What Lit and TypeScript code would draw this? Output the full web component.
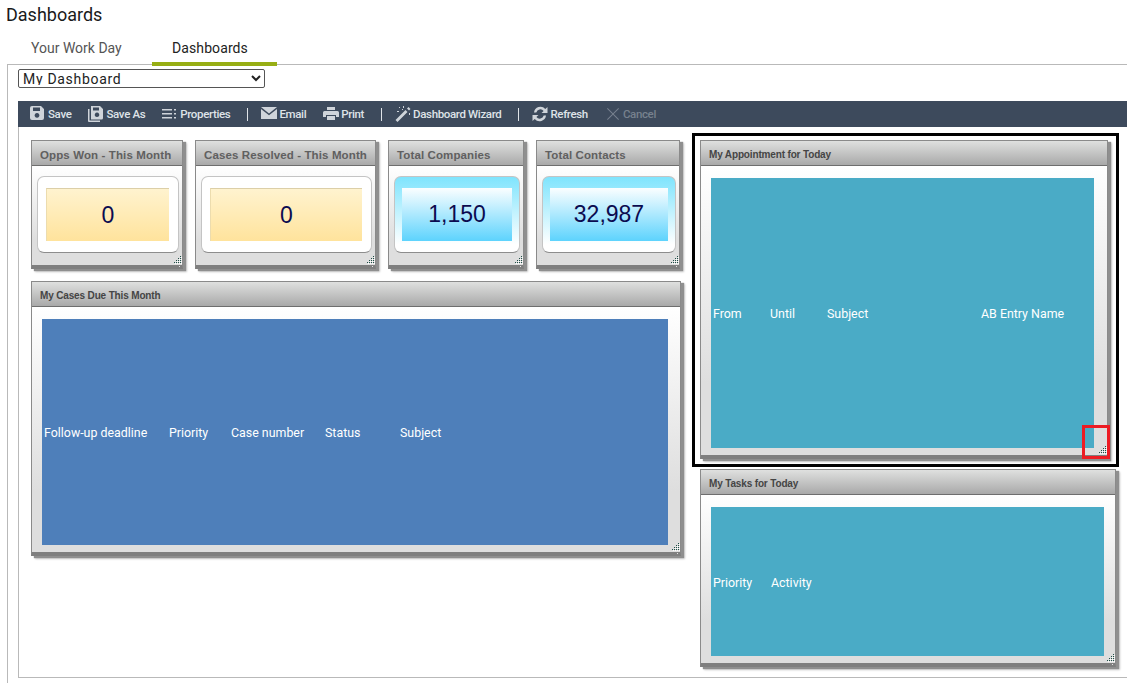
import { LitElement, css, html, svg } from "lit";
import { customElement, property } from "lit/decorators.js";

const grip = svg`<svg class="grip" width="8" height="8" viewBox="0 0 8 8">
  ${[[6, 0], [4, 2], [6, 2], [2, 4], [4, 4], [6, 4], [0, 6], [2, 6], [4, 6], [6, 6]].map(
    ([x, y]) => svg`<rect x=${x} y=${y} width="1" height="1" fill="#1f4f47" /><rect x=${x + 1} y=${y + 1} width="1" height="1" fill="#fff" />`
  )}
  <rect x="5" y="10" width="1" height="1" fill="#e4e4e4" />
</svg>`;

@customElement("dash-panel")
export class DashPanel extends LitElement {
  @property() heading = "";
  @property({ type: Boolean }) small = false;

  protected render() {
    return html`
      <section class=${this.small ? "small" : ""}>
        <header>${this.heading}</header>
        <div class="body"><slot></slot></div>
        ${grip}
      </section>
    `;
  }

  static styles = css`
    :host {
      display: block;
    }
    section {
      position: relative;
      height: 100%;
      box-sizing: border-box;
      display: flex;
      flex-direction: column;
      border: 1px solid #8a8a8a;
      border-bottom: 4px solid #7f7f7f;
      box-shadow: 3px 2px 1px #8f8f8f, 4px 3px 2px #c8c8c8;
      background: #fff;
    }
    header {
      height: 25px;
      flex: none;
      box-sizing: border-box;
      border-bottom: 1px solid #6e6e6e;
      padding-left: 8px;
      font: bold 10px/27px "Liberation Sans", sans-serif;
      letter-spacing: -0.15px;
      color: #454545;
      background: linear-gradient(#dfe0df, #a9a9a9);
      white-space: nowrap;
      overflow: hidden;
    }
    .small header {
      font: bold 11.5px/28px "Liberation Sans", sans-serif;
      letter-spacing: 0.12px;
      color: #606060;
    }
    .body {
      flex: 1;
      min-height: 0;
      display: flex;
      background: linear-gradient(#fff, #dedede 75%);
      padding: 12px var(--body-right, 13px) 7px 10px;
    }
    .small .body {
      padding: 10px 3px 12px 5px;
    }
    .grip {
      position: absolute;
      right: 0;
      bottom: 1px;
      overflow: visible;
    }
  `;
}

@customElement("stat-box")
export class StatBox extends LitElement {
  @property() value = "";
  @property() tone = "gold";

  protected render() {
    return html`<div class="outer ${this.tone}"><div class="inner">${this.value}</div></div>`;
  }

  static styles = css`
    :host {
      display: block;
      flex: 1;
    }
    .outer {
      height: 100%;
      box-sizing: border-box;
      border: 1px solid #c4c4c4;
      border-bottom-color: #8d8d8d;
      border-radius: 7px;
      padding: 11px 9px 11px 8px;
      display: flex;
    }
    .inner {
      flex: 1;
      display: flex;
      align-items: center;
      justify-content: center;
      font: 23px "Liberation Sans", sans-serif;
      color: #0b0b50;
    }
    .gold {
      background: #fff;
    }
    .gold .inner {
      background: linear-gradient(#fff3cf, #ffe39c);
      border-top: 1px solid #dccfa8;
      border-left: 1px solid #ecdcae;
    }
    .blue {
      background: linear-gradient(#7fe4fd, #ffffff 90%);
      padding: 11px 7px;
    }
    .blue .inner {
      background: linear-gradient(#fbfeff, #5dd3fd);
    }
  `;
}

@customElement("data-grid")
export class DataGrid extends LitElement {
  @property({ attribute: false }) columns: [string, number][] = [];
  @property() tone = "teal";

  protected render() {
    return html`
      <div class="grid ${this.tone}">
        ${this.columns.map(([label, w]) => html`<span style="width:${w}px">${label}</span>`)}
      </div>
    `;
  }

  static styles = css`
    :host {
      display: block;
      flex: 1;
    }
    .grid {
      height: 100%;
      display: flex;
      align-items: center;
      padding-left: 2px;
      padding-top: 1px;
      box-sizing: border-box;
      color: #fff;
      font: 400 12.4px "Roboto", sans-serif;
    }
    .teal {
      background: #4aabc6;
    }
    .navy {
      background: #4e7fba;
    }
    span {
      flex: none;
      white-space: nowrap;
    }
  `;
}

const icons = {
  save: svg`<path d="M0 2a2 2 0 0 1 2-2h9l3 3v9a2 2 0 0 1-2 2H2a2 2 0 0 1-2-2zM3 1.500v3.500h7V1.500zM7 7a2.400 2.400 0 1 0 .01 0z" fill-rule="evenodd" />`,
  saveAs: svg`<path d="M3 0h9l3 3v9a1.500 1.500 0 0 1-1.500 1.500H3zM5 1.500v3h6v-3zM9 6.500a2.300 2.300 0 1 0 .01 0z" fill-rule="evenodd" /><path d="M0 3h1.500v11.500H12V16H1a1 1 0 0 1-1-1z" />`,
  props: svg`<path d="M0 3h10v1.600H0zM0 7h10v1.600H0zM0 11h10v1.600H0zM12 3h2v1.600h-2zM12 7h2v1.600h-2zM12 11h2v1.600h-2z" />`,
  mail: svg`<path d="M0 1h16L8 7.500zM0 3l8 6.300L16 3v10H0z" />`,
  print: svg`<path d="M4 1h8v3H4zM1.500 5h13A1.500 1.500 0 0 1 16 6.500V11h-3V9H3v2H0V6.500A1.500 1.500 0 0 1 1.500 5zM4 10h8v4H4z" />`,
  wand: svg`<path d="M.5 14 10.500 4l2 2-10 10zM12 2.500 13.500 1l2 2L14 4.500z" /><path d="M4 1h1v1H4zM8 0h1v2H8zM2 5h2v1H2zM14 7h1v2h-1zM7 3h1v1H7z" />`,
  refresh: svg`<path d="M2 6.500A6.500 6.500 0 0 1 13.300 3L15.500 1v6h-6l2.100-2.100A4.200 4.200 0 0 0 4.300 6.500zM14 9.500A6.500 6.500 0 0 1 2.700 13L.5 15V9h6l-2.100 2.100a4.200 4.200 0 0 0 7.300-1.600z" />`,
  cancel: svg`<path d="M2 2.700 2.700 2 8 7.300 13.300 2l.7.7L8.700 8l5.300 5.300-.7.7L8 8.700 2.700 14l-.7-.7L7.300 8z" />`,
};

@customElement("app-root")
export class AppRoot extends LitElement {
  private tool(icon: keyof typeof icons, label: string, off = false) {
    return html`
      <span class="tool ${off ? "off" : ""}">
        <svg width="16" height="16" viewBox="0 0 16 16">${icons[icon]}</svg>${label}
      </span>
    `;
  }

  protected render() {
    return html`
      <h1>Dashboards</h1>
      <nav>
        <a class="work">Your Work Day</a>
        <a class="active">Dashboards</a>
      </nav>
      <div class="frame">
        <select>
          <option>My Dashboard</option>
        </select>
        <div class="inner">
          <div class="toolbar">
            ${this.tool("save", "Save")} ${this.tool("saveAs", "Save As")} ${this.tool("props", "Properties")}
            <i></i>
            ${this.tool("mail", "Email")} ${this.tool("print", "Print")}
            <i></i>
            ${this.tool("wand", "Dashboard Wizard")}
            <i></i>
            ${this.tool("refresh", "Refresh")} ${this.tool("cancel", "Cancel", true)}
          </div>
          <div class="board">
            <div class="left">
              <div class="stats">
                <dash-panel small class="s1" heading="Opps Won - This Month"><stat-box value="0"></stat-box></dash-panel>
                <dash-panel small class="s2" heading="Cases Resolved - This Month"><stat-box value="0"></stat-box></dash-panel>
                <dash-panel small class="s3" heading="Total Companies"><stat-box tone="blue" value="1,150"></stat-box></dash-panel>
                <dash-panel small class="s4" heading="Total Contacts"><stat-box tone="blue" value="32,987"></stat-box></dash-panel>
              </div>
              <dash-panel class="cases" heading="My Cases Due This Month">
                <data-grid
                  tone="navy"
                  .columns=${[["Follow-up deadline", 125], ["Priority", 62], ["Case number", 94], ["Status", 75], ["Subject", 100]]}
                ></data-grid>
              </dash-panel>
            </div>
            <div class="right">
              <div class="selected">
                <dash-panel class="appt" heading="My Appointment for Today">
                  <data-grid
                    .columns=${[["From", 57], ["Until", 57], ["Subject", 154], ["AB Entry Name", 110]]}
                  ></data-grid>
                </dash-panel>
                <div class="marker"></div>
              </div>
              <dash-panel class="tasks" heading="My Tasks for Today">
                <data-grid .columns=${[["Priority", 58], ["Activity", 60]]}></data-grid>
              </dash-panel>
            </div>
          </div>
        </div>
      </div>
    `;
  }

  static styles = css`
    :host {
      display: block;
      height: 683px;
      overflow: hidden;
      font-family: "Roboto", sans-serif;
      background: #fff;
    }
    h1 {
      margin: 0;
      padding: 5px 0 0 6px;
      height: 31px;
      box-sizing: border-box;
      font: 400 18px/20px "Roboto", sans-serif;
      color: #1a1a1a;
    }
    nav {
      position: relative;
      display: flex;
      height: 35px;
      margin-left: 7px;
    }
    nav a {
      box-sizing: border-box;
      height: 35px;
      padding-top: 9px;
      font-size: 14px;
      line-height: 16px;
      color: #555;
    }
    .work {
      width: 145px;
      padding-left: 24px;
    }
    .active {
      width: 125px;
      padding-left: 20px;
      color: #222;
      letter-spacing: 0.1px;
      border-bottom: 4px solid #97ae14;
    }
    .frame {
      margin-left: 7px;
      margin-top: -2px;
      height: 700px;
      border-left: 1px solid #b9b9b9;
      border-top: 1px solid #b9b9b9;
      padding: 4px 0 0 10px;
    }
    select {
      display: block;
      width: 247px;
      height: 19px;
      padding: 0 0 2px;
      box-sizing: border-box;
      font: 14px "Roboto", sans-serif;
      letter-spacing: 0.7px;
      background: #fff;
      color: #222;
      border: 1px solid #555;
      border-radius: 2px;
    }
    .inner {
      margin-top: 13px;
      height: 577px;
      box-sizing: border-box;
      border-left: 1px solid #b9b9b9;
      border-bottom: 1px solid #b9b9b9;
    }
    .toolbar {
      margin-left: -1px;
      height: 26px;
      background: #3d4a5c;
      display: flex;
      align-items: center;
      padding-left: 12px;
      gap: 17px;
      font-size: 11.5px;
      font-weight: 500;
      color: #dfe3e8;
      letter-spacing: -0.35px;
    }
    .toolbar i {
      width: 1px;
      height: 13px;
      margin-right: -4px;
      background: #dfe3e8;
    }
    .tool {
      display: flex;
      align-items: center;
      gap: 2px;
      white-space: nowrap;
    }
    .tool svg {
      fill: #cfd4da;
    }
    .off {
      color: #77818e;
    }
    .off svg {
      fill: #77818e;
    }
    .board {
      display: flex;
      align-items: flex-start;
      padding: 13px 0 0 12px;
    }
    .left {
      width: 650px;
      flex: none;
    }
    .stats {
      display: flex;
      gap: 12px;
      height: 129px;
      margin-bottom: 12px;
    }
    .stats dash-panel {
      flex: none;
    }
    .s1 {
      width: 152px;
    }
    .s2 {
      width: 181px;
    }
    .s3 {
      width: 136px;
    }
    .s4 {
      width: 144px;
    }
    .cases {
      --body-right: 12px;
      height: 275px;
    }
    .right {
      margin-left: 11px;
      margin-top: -7px;
      flex: none;
      width: 427px;
    }
    .selected {
      position: relative;
      box-sizing: border-box;
      height: 334px;
      border: 3px solid #000;
      padding: 4px 8px 5px 5px;
    }
    .appt {
      height: 100%;
    }
    .marker {
      position: absolute;
      right: 6px;
      bottom: 5px;
      width: 28px;
      height: 34px;
      box-sizing: border-box;
      border: 3px solid #ed1c24;
    }
    .tasks {
      --body-right: 11px;
      margin: 2px 0 0 8px;
      width: 416px;
      height: 198px;
    }
  `;
}
